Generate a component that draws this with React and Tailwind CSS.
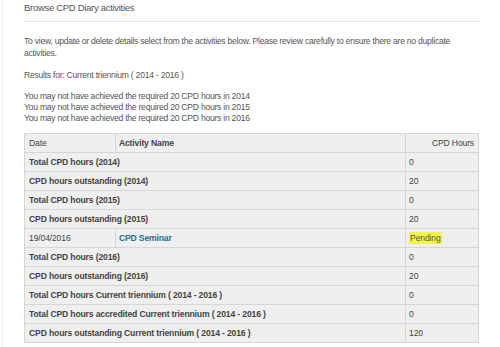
const rows = [
    { label: "Total CPD hours (2014)", hours: "0" },
    { label: "CPD hours outstanding (2014)", hours: "20" },
    { label: "Total CPD hours (2015)", hours: "0" },
    { label: "CPD hours outstanding (2015)", hours: "20" },
    { date: "19/04/2016", activity: "CPD Seminar", hours: "Pending" },
    { label: "Total CPD hours (2016)", hours: "0" },
    { label: "CPD hours outstanding (2016)", hours: "20" },
    { label: "Total CPD hours Current triennium ( 2014 - 2016 )", hours: "0" },
    { label: "Total CPD hours accredited Current triennium ( 2014 - 2016 )", hours: "0" },
    { label: "CPD hours outstanding Current triennium ( 2014 - 2016 )", hours: "120" },
];

export default function App() {
    return (
        <div
            className="h-[347px] w-[500px] overflow-hidden bg-white text-[#555]"
            style={{ fontFamily: '"Liberation Sans", Arial, sans-serif' }}
        >
            <div className="ml-[2px] h-full border-l border-[#efefef] pl-[21px] pr-[20px]">
                {/* Heading */}
                <h2 className="pt-[2px] text-[9.5px] leading-[12px] tracking-[-0.3px] text-[#555]">Browse CPD Diary activities</h2>
                <hr className="mt-[7px] border-t border-[#e6e6e6]" />

                {/* Intro */}
                <div className="text-[8.6px] tracking-[-0.25px]">
                    <p className="mt-[13px] leading-[12px]">
                        To view, update or delete details select from the activities below. Please review carefully to ensure there are no duplicate activities.
                    </p>
                    <p className="mt-[10px] leading-[12px]">Results for: Current triennium ( 2014 - 2016 )</p>
                    <div className="mt-[10px] leading-[11px]">
                        <p>You may not have achieved the required 20 CPD hours in 2014</p>
                        <p>You may not have achieved the required 20 CPD hours in 2015</p>
                        <p>You may not have achieved the required 20 CPD hours in 2016</p>
                    </div>
                </div>

                {/* Table */}
                <table className="mt-[9px] w-[455px] border-collapse bg-[#efefef] text-[8.6px] tracking-[-0.15px] text-[#444]">
                    <colgroup>
                        <col className="w-[91px]" />
                        <col className="w-[291px]" />
                        <col className="w-[73px]" />
                    </colgroup>
                    <thead>
                        <tr className="h-[19px]">
                            <th className="border border-[#d6d6d6] px-[4px] text-left font-normal">Date</th>
                            <th className="border border-[#d6d6d6] px-[3px] text-left font-bold">Activity Name</th>
                            <th className="border border-[#d6d6d6] px-[4px] text-right font-normal">CPD Hours</th>
                        </tr>
                    </thead>
                    <tbody>
                        {rows.map((r, i) =>
                            r.label ? (
                                <tr key={i} className="h-[19px]">
                                    <td colSpan={2} className="border border-[#d6d6d6] px-[4px] font-bold">
                                        {r.label}
                                    </td>
                                    <td className="border border-[#d6d6d6] px-[3px]">{r.hours}</td>
                                </tr>
                            ) : (
                                <tr key={i} className="h-[19px]">
                                    <td className="border border-[#d6d6d6] px-[4px]">{r.date}</td>
                                    <td className="border border-[#d6d6d6] px-[3px] font-bold text-[#1d6f8c]">{r.activity}</td>
                                    <td className="border border-[#d6d6d6] px-[3px]">
                                        <span className="bg-[#f3f542] px-[1px] py-[1px] text-[#555]">{r.hours}</span>
                                    </td>
                                </tr>
                            )
                        )}
                    </tbody>
                </table>
            </div>
        </div>
    );
}
